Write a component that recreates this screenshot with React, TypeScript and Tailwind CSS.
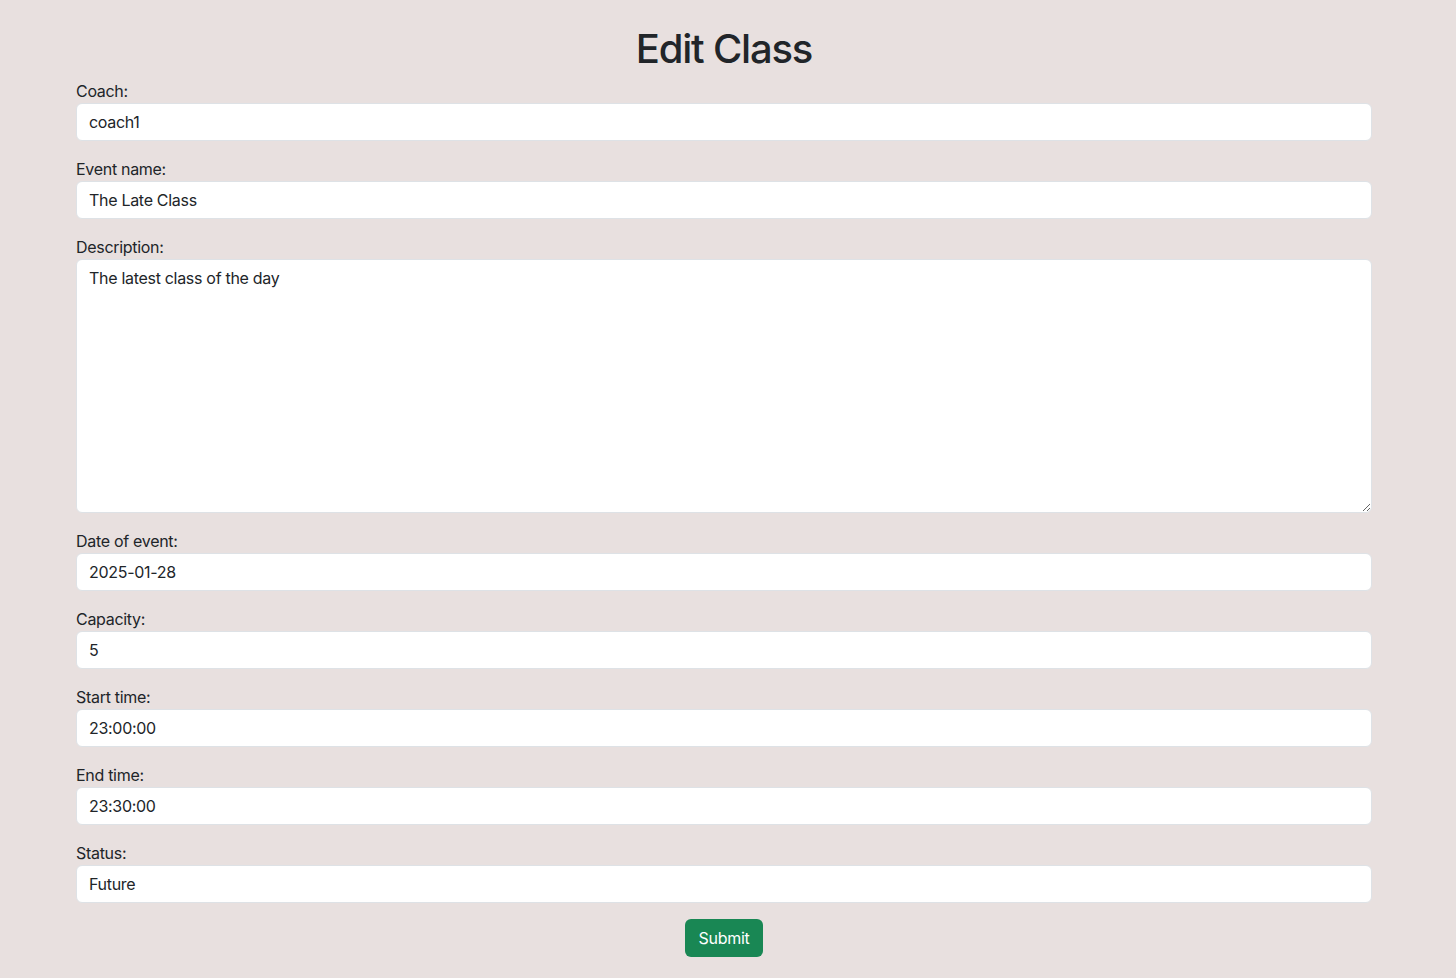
import React from 'react';

const fields = [
  { label: 'Coach:', value: 'coach1' },
  { label: 'Event name:', value: 'The Late Class' },
  { label: 'Description:', value: 'The latest class of the day', area: true },
  { label: 'Date of event:', value: '2025-01-28' },
  { label: 'Capacity:', value: '5' },
  { label: 'Start time:', value: '23:00:00' },
  { label: 'End time:', value: '23:30:00' },
  { label: 'Status:', value: 'Future' },
];

const inputCls =
  'block w-full bg-white border border-[#dee2e6] rounded-[6px] px-3 py-[6px] text-base leading-6 tracking-[-0.3px] text-[#212529] outline-none';

export default function App() {
  return (
    <div className="min-h-[978px] bg-[#e8e0df] font-['Inter',sans-serif] text-[#212529]">
      <div className="w-[1296px] ml-[76px] pt-[23px]">
        <h1 className="text-[40px] leading-[48px] font-medium tracking-[-1.2px] text-center mt-[2px] mb-[6px]">
          Edit Class
        </h1>
        <form onSubmit={(e) => e.preventDefault()}>
          {fields.map((f) => (
            <div key={f.label} className="mb-4">
              <label className="block text-base leading-6 tracking-[-0.3px]">{f.label}</label>
              {f.area ? (
                <textarea className={inputCls + ' h-[254px]'} defaultValue={f.value} />
              ) : (
                <input className={inputCls + ' h-[38px]'} defaultValue={f.value} />
              )}
            </div>
          ))}
          <div className="flex justify-center">
            <button
              type="submit"
              className="h-[38px] w-[78px] rounded-[6px] bg-[#198754] text-white text-base leading-6 tracking-[-0.3px]"
            >
              Submit
            </button>
          </div>
        </form>
      </div>
    </div>
  );
}
